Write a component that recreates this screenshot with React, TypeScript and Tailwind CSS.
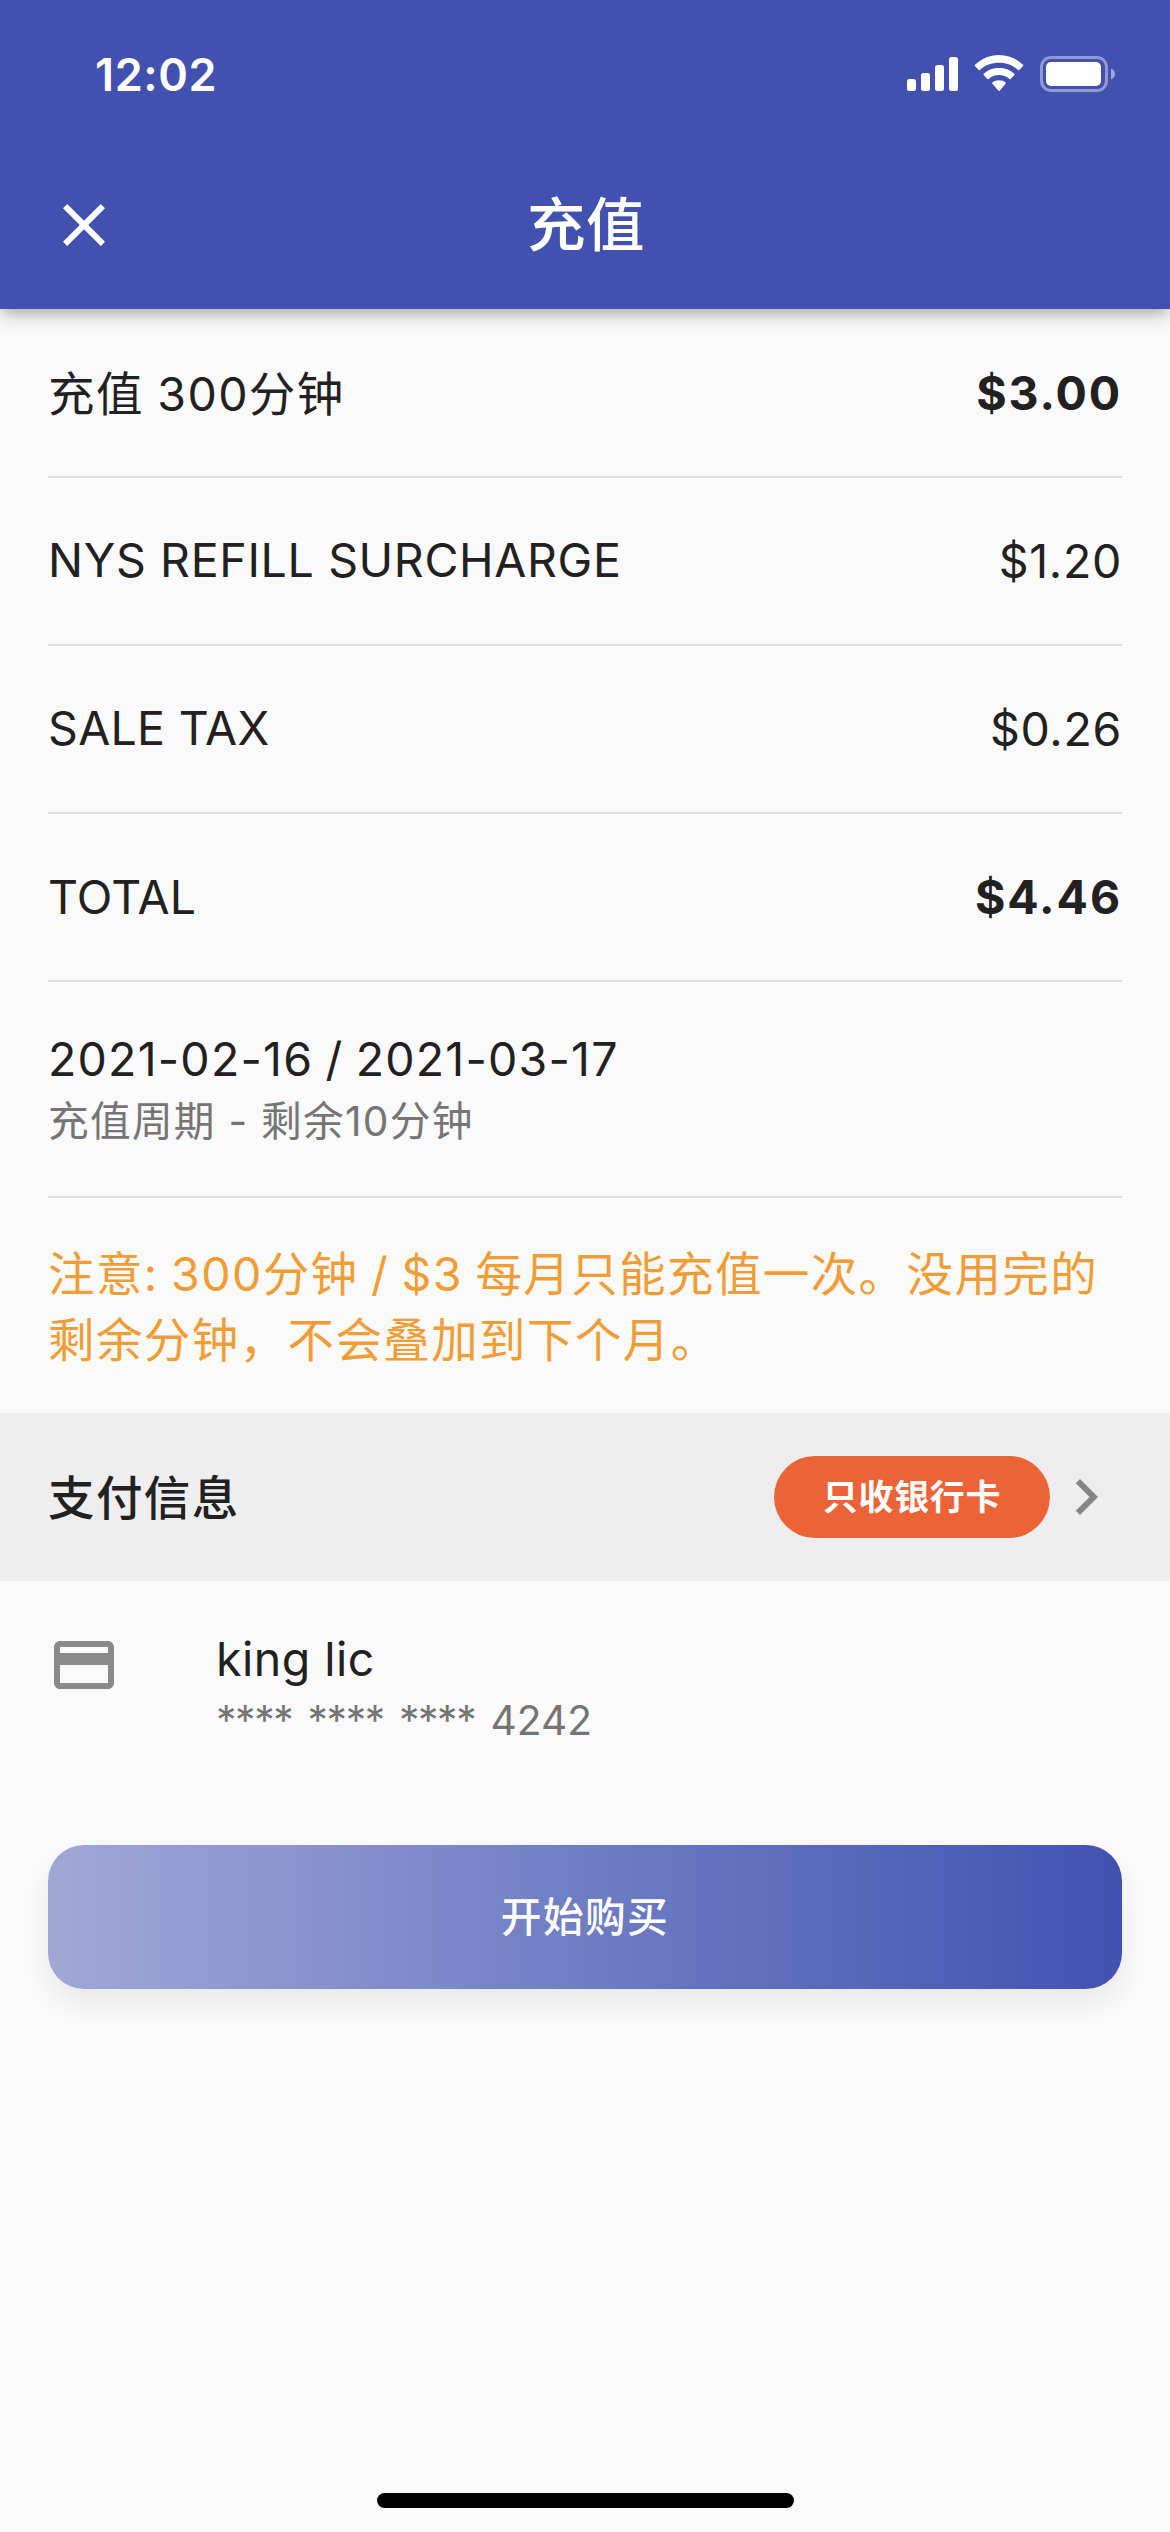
const charges = [
  { label: "充值 300分钟", amount: "$3.00", labelClass: "pt-[5px] tracking-[1.4px] [word-spacing:-1px]", bold: true },
  { label: "NYS REFILL SURCHARGE", amount: "$1.20", labelClass: "tracking-[0.65px]", bold: false },
  { label: "SALE TAX", amount: "$0.26", labelClass: "tracking-[0.3px]", bold: false },
  { label: "TOTAL", amount: "$4.46", labelClass: "pt-px tracking-[0.2px]", bold: true },
];

function StatusBar() {
  return (
    <div className="flex h-[141px] items-start justify-between pt-[45px] pr-[54px] pl-[95px]">
      <span className="text-[45px] leading-[60px] font-semibold tracking-[0.6px]">12:02</span>
      <svg width="210" height="38" viewBox="0 0 210 38" className="mt-[9px] fill-white">
        {/* Signal */}
        <rect x="1" y="25" width="9" height="12" rx="2.5" />
        <rect x="15" y="19" width="9" height="18" rx="2.5" />
        <rect x="29" y="11" width="9" height="26" rx="2.5" />
        <rect x="43" y="3" width="9" height="34" rx="2.5" />
        {/* Wifi */}
        <path d="M93 1c-9 0-17.700 3.700-24 9.800a.8.8 0 0 0 0 1.200l3.700 4a.8.8 0 0 0 1.200 0C79 11 85.700 8.700 93 8.700S107 11 112.100 16a.8.8 0 0 0 1.200 0l3.700-4a.8.8 0 0 0 0-1.200C110.700 4.700 102 1 93 1z" />
        <path d="M93 13.800c-5.800 0-11.200 2.300-15.300 6a.8.8 0 0 0 0 1.200l3.700 4a.8.8 0 0 0 1.200 0c2.900-2.500 6.400-4 10.400-4s7.500 1.500 10.400 4a.8.8 0 0 0 1.200 0l3.700-4a.8.8 0 0 0 0-1.200c-4.100-3.700-9.500-6-15.300-6z" />
        <path d="M93 26.200c-2.500 0-4.800.9-6.600 2.300a.8.8 0 0 0 0 1.200l6 7a.8.8 0 0 0 1.200 0l6-7a.8.8 0 0 0 0-1.200c-1.800-1.400-4.100-2.300-6.600-2.300z" />
        {/* Battery */}
        <rect x="135.500" y="3.500" width="65" height="33" rx="9.500" fill="none" stroke="white" strokeOpacity="0.42" strokeWidth="3" />
        <rect x="140" y="8" width="55" height="24" rx="5" />
        <path d="M205 14.500c2.400 1 4 3.100 4 5.500s-1.600 4.500-4 5.500z" fillOpacity="0.5" />
      </svg>
    </div>
  );
}

function CloseIcon() {
  return (
    <svg width="72" height="72" viewBox="0 0 24 24" className="fill-white">
      <path d="M19 6.410L17.590 5 12 10.590 6.410 5 5 6.410 10.590 12 5 17.590 6.410 19 12 13.410 17.590 19 19 17.590 13.410 12z" />
    </svg>
  );
}

export default function App() {
  return (
    <div className="flex h-[2532px] w-[1170px] flex-col bg-[#fafafa] font-['Inter','Noto_Sans_CJK_SC',sans-serif] text-[46.5px] tracking-[1.4px] text-[#212121]">
      {/* Header */}
      <header className="relative h-[309px] bg-[#4251af] text-white shadow-[0_6px_12px_-3px_rgba(0,0,0,0.2),0_12px_15px_rgba(0,0,0,0.08),0_3px_20px_rgba(0,0,0,0.08)]">
        <StatusBar />
        <div className="grid h-[168px] grid-cols-[168px_1fr_168px] items-center">
          <button className="flex justify-center">
            <CloseIcon />
          </button>
          <h1 className="pl-[2px] text-center text-[58.5px] leading-[80px] font-medium tracking-[0.6px]">充值</h1>
        </div>
      </header>

      {/* Charges */}
      <section className="px-12">
        {charges.map((row) => (
          <div key={row.label} className="flex h-[168px] items-center justify-between border-b-2 border-[#dcdcdc] first:h-[169px]">
            <span className={row.labelClass}>{row.label}</span>
            <span className={row.bold ? "pt-[2px] font-bold tracking-[1.9px]" : "pt-px tracking-[0.7px]"}>{row.amount}</span>
          </div>
        ))}
        <div className="flex h-[216px] flex-col justify-center border-b-2 border-[#dcdcdc]">
          <p className="leading-[66px] tracking-[1.2px] [word-spacing:-2px]">2021-02-16 / 2021-03-17</p>
          <p className="text-[40.7px] leading-[60px] tracking-[1.25px] text-[#757575]">充值周期 - 剩余10分钟</p>
        </div>
        <p className="h-[215px] pt-[43px] leading-[66px] whitespace-nowrap text-[#f09d37] [word-spacing:-2px]">
          注意: 300分钟 / $3 每月只能充值一次。没用完的
          <br />
          剩余分钟，不会叠加到下个月。
        </p>
      </section>

      {/* Payment */}
      <section className="flex h-[168px] items-center bg-[#eeeeee] px-12">
        <h2 className="flex-1 pt-[3px] font-medium">支付信息</h2>
        <span className="flex h-[82px] w-[276px] items-center justify-center rounded-full bg-[#ec6337] pt-px text-[35px] font-bold tracking-[0.7px] text-white">
          只收银行卡
        </span>
        <svg width="72" height="72" viewBox="0 0 24 24" className="fill-[#868686]">
          <path d="M10 6L8.590 7.410 13.170 12l-4.580 4.590L10 18l6-6z" />
        </svg>
      </section>
      <section className="flex px-12 pt-[45px]">
        <svg width="72" height="72" viewBox="0 0 24 24" className="mt-[3px] mr-24 fill-[#8a8a8a]">
          <path d="M20 4H4c-1.110 0-1.990.89-1.990 2L2 18c0 1.110.89 2 2 2h16c1.110 0 2-.89 2-2V6c0-1.110-.89-2-2-2zm0 14H4v-6h16v6zm0-10H4V6h16v2z" />
        </svg>
        <div>
          <p className="leading-[66px] tracking-[0.5px]">king lic</p>
          <p className="text-[40.7px] leading-[58px] text-[#757575] tracking-[0px]">
            <span className="tracking-[-1.3px] [word-spacing:5px]">**** **** **** </span>4242
          </p>
        </div>
      </section>

      <button className="mx-12 mt-[95px] h-36 rounded-[36px] bg-linear-to-r from-[#a1a8d7] to-[#4251af] pt-[2px] text-[40.7px] font-medium text-white shadow-[0_15px_30px_rgba(0,0,0,0.07)]">
        开始购买
      </button>

      {/* Home indicator */}
      <div className="mx-auto mt-auto mb-6 h-[15px] w-[417px] rounded-full bg-black" />
    </div>
  );
}
